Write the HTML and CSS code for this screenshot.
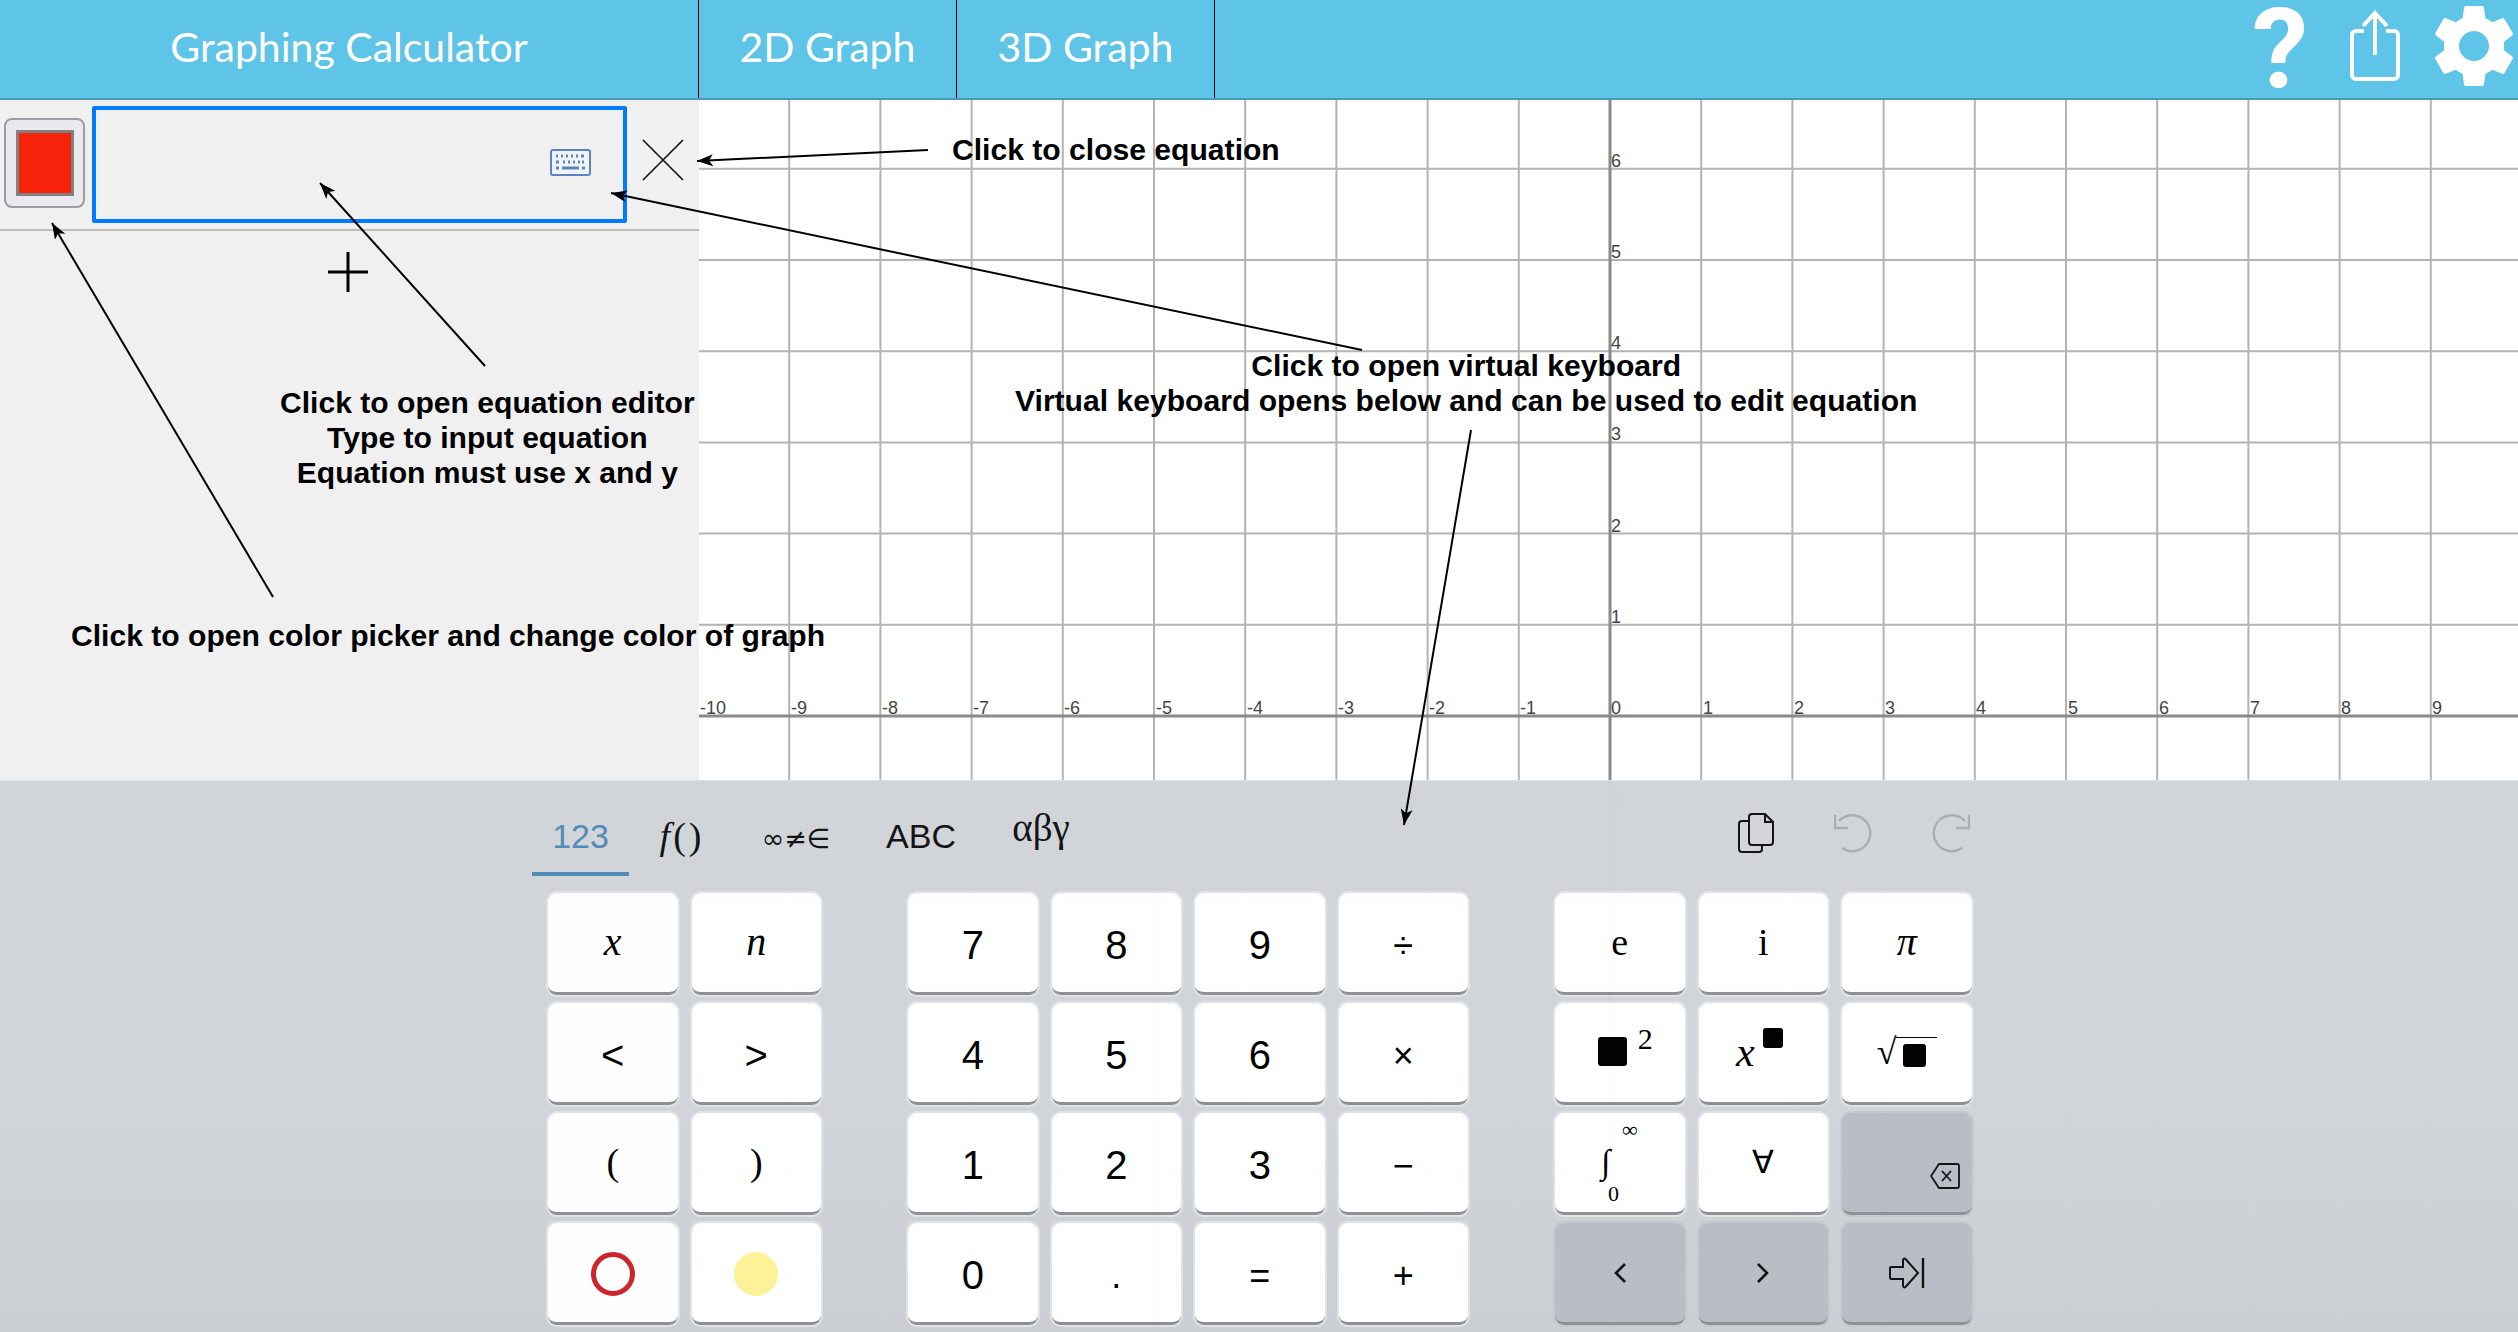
FILE: index.html
```html
<!DOCTYPE html>
<html lang="en">
<head>
  <meta charset="utf-8">
  <title>Graphing Calculator</title>
  <link rel="stylesheet" href="styles.css">
</head>
<body>
<div class="page">

  <!-- top bar -->
  <header class="topbar">
    <div class="app-title">Graphing Calculator</div>
    <div class="mode-tab">2D Graph</div>
    <div class="mode-tab">3D Graph</div>
    <div class="top-icons">
      <span class="help-icon">?</span>
      <svg class="share-icon" width="60" height="76" viewBox="0 0 60 76">
        <path d="M19 21H11a4 4 0 0 0-4 4V65a4 4 0 0 0 4 4H49a4 4 0 0 0 4-4V25a4 4 0 0 0-4-4H41" fill="none" stroke="#fff" stroke-width="4"/>
        <path d="M30 45V3M18 16L30 3L42 16" fill="none" stroke="#fff" stroke-width="4"/>
      </svg>
      <svg class="gear-icon" width="100" height="100" viewBox="0 0 24 24">
        <path fill="#fff" fill-rule="evenodd" d="M19.14,12.94c0.04-0.3,0.06-0.61,0.06-0.94c0-0.32-0.02-0.64-0.07-0.94l2.03-1.58c0.18-0.14,0.23-0.41,0.12-0.61l-1.92-3.32c-0.12-0.22-0.37-0.29-0.59-0.22l-2.39,0.96c-0.5-0.38-1.03-0.7-1.62-0.94L14.4,2.81c-0.04-0.24-0.24-0.41-0.48-0.41h-3.84c-0.24,0-0.43,0.17-0.47,0.41L9.25,5.35C8.66,5.59,8.12,5.92,7.63,6.29L5.24,5.33c-0.22-0.08-0.47,0-0.59,0.22L2.74,8.87C2.62,9.08,2.66,9.34,2.86,9.48l2.03,1.58C4.84,11.36,4.8,11.69,4.8,12s0.02,0.64,0.07,0.94l-2.03,1.58c-0.18,0.14-0.23,0.41-0.12,0.61l1.92,3.32c0.12,0.22,0.37,0.29,0.59,0.22l2.39-0.96c0.5,0.38,1.03,0.7,1.62,0.94l0.36,2.54c0.05,0.24,0.24,0.41,0.48,0.41h3.84c0.24,0,0.44-0.17,0.47-0.41l0.36-2.54c0.59-0.24,1.13-0.56,1.62-0.94l2.39,0.96c0.22,0.08,0.47,0,0.59-0.22l1.92-3.32c0.12-0.22,0.07-0.47-0.12-0.61L19.14,12.94z M12,15.6c-1.98,0-3.6-1.62-3.6-3.6s1.62-3.6,3.6-3.6s3.6,1.62,3.6,3.6S13.98,15.6,12,15.6z"/>
      </svg>
    </div>
  </header>

  <main class="workspace">
    <!-- equation list -->
    <aside class="equations">
      <div class="equation-row">
        <button class="color-button"><span class="color-swatch"></span></button>
        <div class="equation-input">
          <svg width="41" height="27" viewBox="0 0 41 27">
            <rect x="1" y="1" width="39" height="25" rx="2" fill="#f0f4f8" stroke="#5a86bd" stroke-width="2"/>
            <path d="M6 7h2M11 7h2M16 7h2M21 7h2M26 7h2M31 7h3M6 13h3M13 13h2M18 13h2M23 13h2M28 13h2M32 13h2M6 19h3M12 19h17M32 19h3" stroke="#5a86bd" stroke-width="3" fill="none"/>
          </svg>
        </div>
        <svg class="close-icon" width="42" height="42" viewBox="0 0 42 42">
          <path d="M1 1L41 41M41 1L1 41" stroke="#111" stroke-width="1.6" fill="none"/>
        </svg>
      </div>
      <div class="add-row">
        <svg width="42" height="42" viewBox="0 0 42 42">
          <path d="M21 1V41M1 21H41" stroke="#000" stroke-width="3" fill="none"/>
        </svg>
      </div>
    </aside>

    <!-- graph canvas, coordinates are page pixels -->
    <svg class="graph" viewBox="699 100 1819 1232">
      <path class="grid-line" d="M789.2 100V1332M880.4 100V1332M971.6 100V1332M1062.8 100V1332M1154 100V1332M1245.2 100V1332M1336.4 100V1332M1427.6 100V1332M1518.8 100V1332M1701.2 100V1332M1792.4 100V1332M1883.6 100V1332M1974.8 100V1332M2066 100V1332M2157.2 100V1332M2248.4 100V1332M2339.6 100V1332M2430.8 100V1332"/>
      <path class="grid-line" d="M699 168.8H2518M699 260H2518M699 351.2H2518M699 442.4H2518M699 533.6H2518M699 624.8H2518M699 807.2H2518M699 898.4H2518M699 989.6H2518M699 1080.8H2518M699 1172H2518M699 1263.2H2518"/>
      <path class="axis-line" d="M1610 100V1332M699 716H2518"/>
      <g class="axis-label">
        <text x="700" y="714">-10</text>
        <text x="791" y="714">-9</text>
        <text x="882" y="714">-8</text>
        <text x="973" y="714">-7</text>
        <text x="1064" y="714">-6</text>
        <text x="1156" y="714">-5</text>
        <text x="1247" y="714">-4</text>
        <text x="1338" y="714">-3</text>
        <text x="1429" y="714">-2</text>
        <text x="1520" y="714">-1</text>
        <text x="1611" y="714">0</text>
        <text x="1703" y="714">1</text>
        <text x="1794" y="714">2</text>
        <text x="1885" y="714">3</text>
        <text x="1976" y="714">4</text>
        <text x="2068" y="714">5</text>
        <text x="2159" y="714">6</text>
        <text x="2250" y="714">7</text>
        <text x="2341" y="714">8</text>
        <text x="2432" y="714">9</text>
        <text x="1611" y="167">6</text>
        <text x="1611" y="258">5</text>
        <text x="1611" y="349">4</text>
        <text x="1611" y="440">3</text>
        <text x="1611" y="532">2</text>
        <text x="1611" y="623">1</text>
        <text x="1611" y="805">-1</text>
        <text x="1611" y="896">-2</text>
      </g>
    </svg>
  </main>

  <!-- virtual keyboard, sits over the graph -->
  <section class="keyboard">
    <div class="kb-toolbar">
      <div class="kb-tab kb-tab-active">123</div>
      <div class="kb-tab kb-tab-func"><i>f</i>()</div>
      <div class="kb-tab kb-tab-symbols">∞≠∈</div>
      <div class="kb-tab kb-tab-abc">ABC</div>
      <div class="kb-tab kb-tab-greek">αβγ</div>
      <div class="kb-tools">
        <svg width="36" height="40" viewBox="0 0 36 40">
          <path d="M11 8H4a3 3 0 0 0-3 3V36a3 3 0 0 0 3 3H21a3 3 0 0 0 3-3V32" fill="none" stroke="#111" stroke-width="2"/>
          <path d="M14 1H27L35 9V29a3 3 0 0 1-3 3H14a3 3 0 0 1-3-3V4a3 3 0 0 1 3-3ZM27 1V9H35" fill="none" stroke="#111" stroke-width="2"/>
        </svg>
        <svg width="38" height="40" viewBox="0 0 38 40">
          <path d="M8 35A18 18 0 1 0 5 8M1 2V15H14" fill="none" stroke="#a9adb2" stroke-width="2.4"/>
        </svg>
        <svg width="38" height="40" viewBox="0 0 38 40">
          <path d="M30 35A18 18 0 1 1 33 8M37 2V15H24" fill="none" stroke="#a9adb2" stroke-width="2.4"/>
        </svg>
      </div>
    </div>

    <div class="kb-keys">
      <div class="key-group group-left">
        <div class="key key-math">x</div>
        <div class="key key-math">n</div>
        <div class="key key-digit">&lt;</div>
        <div class="key key-digit">&gt;</div>
        <div class="key key-serif">(</div>
        <div class="key key-serif">)</div>
        <div class="key"><span class="ring"></span></div>
        <div class="key"><span class="dot"></span></div>
      </div>

      <div class="key-group group-mid">
        <div class="key key-digit">7</div>
        <div class="key key-digit">8</div>
        <div class="key key-digit">9</div>
        <div class="key key-op">÷</div>
        <div class="key key-digit">4</div>
        <div class="key key-digit">5</div>
        <div class="key key-digit">6</div>
        <div class="key key-op">×</div>
        <div class="key key-digit">1</div>
        <div class="key key-digit">2</div>
        <div class="key key-digit">3</div>
        <div class="key key-op">−</div>
        <div class="key key-digit">0</div>
        <div class="key key-op">.</div>
        <div class="key key-op">=</div>
        <div class="key key-op">+</div>
      </div>

      <div class="key-group group-right">
        <div class="key key-serif">e</div>
        <div class="key key-serif">i</div>
        <div class="key key-math">π</div>
        <div class="key key-serif key-power"><span class="box box-big"></span><span class="power-two">2</span></div>
        <div class="key key-math key-xpow">x<span class="box box-small"></span></div>
        <div class="key key-serif key-root">√<span class="root-top"><span class="box box-mid"></span></span></div>
        <div class="key key-integral">
          <span class="int-top">∞</span>
          <span class="int-sign">∫</span>
          <span class="int-bottom">0</span>
        </div>
        <div class="key key-serif key-forall">∀</div>
        <div class="key key-dark key-backspace">
          <svg width="30" height="26" viewBox="0 0 30 26">
            <path d="M9 1H27a2 2 0 0 1 2 2V23a2 2 0 0 1-2 2H9L1 13Z" fill="none" stroke="#111" stroke-width="1.8"/>
            <path d="M12 8L21 18M21 8L12 18" stroke="#111" stroke-width="1.8" fill="none"/>
          </svg>
        </div>
        <div class="key key-dark">
          <svg width="14" height="22" viewBox="0 0 14 22"><path d="M12 2L3 11L12 20" fill="none" stroke="#111" stroke-width="2.6"/></svg>
        </div>
        <div class="key key-dark">
          <svg width="14" height="22" viewBox="0 0 14 22"><path d="M2 2L11 11L2 20" fill="none" stroke="#111" stroke-width="2.6"/></svg>
        </div>
        <div class="key key-dark">
          <svg width="36" height="32" viewBox="0 0 36 32">
            <path d="M2 10H14V3a1.5 1.5 0 0 1 2.5-1L29 16L16.5 30a1.5 1.5 0 0 1-2.5-1V22H2a1.5 1.5 0 0 1-1-1V11a1.5 1.5 0 0 1 1-1Z" fill="none" stroke="#111" stroke-width="2"/>
            <path d="M34 1V31" stroke="#111" stroke-width="2.4"/>
          </svg>
        </div>
      </div>
    </div>
  </section>

  <!-- help annotations drawn over the screenshot -->
  <div class="notes">
    <svg class="note-arrows" viewBox="0 0 2518 1332">
      <defs>
        <marker id="arrowhead" markerWidth="16" markerHeight="12" refX="0" refY="6" orient="auto" markerUnits="userSpaceOnUse">
          <path d="M0 6L16 0L12 6L16 12Z" fill="#000"/>
        </marker>
      </defs>
      <line x1="697" y1="161" x2="928" y2="150" marker-start="url(#arrowhead)"/>
      <line x1="611" y1="193" x2="1362" y2="350" marker-start="url(#arrowhead)"/>
      <line x1="320" y1="183" x2="485" y2="366" marker-start="url(#arrowhead)"/>
      <line x1="52" y1="223" x2="273" y2="597" marker-start="url(#arrowhead)"/>
      <line x1="1404" y1="825" x2="1471" y2="430" marker-start="url(#arrowhead)"/>
    </svg>
    <div class="note note-close">Click to close equation</div>
    <div class="note note-editor">Click to open equation editor<br>Type to input equation<br>Equation must use x and y</div>
    <div class="note note-color">Click to open color picker and change color of graph</div>
    <div class="note note-keyboard">Click to open virtual keyboard<br>Virtual keyboard opens below and can be used to edit equation</div>
  </div>

</div>
</body>
</html>
```

FILE: styles.css
```css
/* page */
html, body {
  margin: 0;
  padding: 0;
}

.page {
  position: relative;
  display: flex;
  flex-direction: column;
  width: 2518px;
  height: 1332px;
  overflow: hidden;
  background-color: #fff;
  font-family: "Liberation Sans", Arial, sans-serif;
  color: #000;
}

/* top bar */
.topbar {
  display: flex;
  align-items: stretch;
  flex: none;
  height: 98px;
  background-color: #5ec4e8;
  border-bottom: 2px solid #4a9bb5;
  color: #fff;
  font-family: Lato, "Open Sans", sans-serif;
  font-size: 41px;
  font-weight: 400;
}

.app-title {
  display: flex;
  align-items: center;
  justify-content: center;
  width: 698px;
  padding-bottom: 6px;
  border-right: 1px solid #000;
}

.mode-tab {
  display: flex;
  align-items: center;
  justify-content: center;
  width: 257px;
  padding-bottom: 6px;
  border-right: 1px solid #000;
}

.top-icons {
  display: flex;
  align-items: center;
  margin-left: auto;
}

.help-icon {
  width: 70px;
  margin: 0 30px 0 0;
  font-family: Roboto, sans-serif;
  font-size: 112px;
  font-weight: 700;
  line-height: 98px;
  text-align: center;
}

.share-icon {
  margin-right: 19px;
  margin-top: -2px;
}

.gear-icon {
  margin-right: -6px;
  margin-top: -6px;
}

/* equation list */
.workspace {
  display: flex;
  flex: 1;
  min-height: 0;
}

.equations {
  flex: none;
  width: 699px;
  background-color: #f0f0f0;
}

.equation-row {
  display: flex;
  align-items: center;
  height: 131px;
  padding-left: 4px;
  box-sizing: border-box;
  border-bottom: 2px solid #bdbdbd;
}

.color-button {
  display: flex;
  align-items: center;
  justify-content: center;
  width: 81px;
  height: 90px;
  margin: -4px 7px 0 0;
  padding: 0;
  background-color: #e9e9ef;
  border: 2px solid #9c9ca6;
  border-radius: 8px;
}

.color-swatch {
  width: 58px;
  height: 66px;
  box-sizing: border-box;
  background-color: #f62209;
  border: 3px solid #808080;
}

.equation-input {
  display: flex;
  align-items: center;
  justify-content: flex-end;
  width: 535px;
  height: 117px;
  padding-right: 32px;
  box-sizing: border-box;
  border: 4px solid #007aff;
  border-radius: 2px;
}

.equation-input svg {
  margin-top: -4px;
}

.close-icon {
  margin: -9px 0 0 15px;
}

.add-row {
  display: flex;
  justify-content: center;
  padding: 20px 4px 0 0;
}

/* graph */
.graph {
  flex: 1;
  display: block;
  height: 100%;
  background-color: #fff;
}

.grid-line {
  fill: none;
  stroke: #b4b4b4;
  stroke-width: 2;
}

.axis-line {
  fill: none;
  stroke: #8a8a8a;
  stroke-width: 3;
}

.axis-label {
  font-family: "Liberation Sans", Arial, sans-serif;
  font-size: 18px;
  fill: #444;
}

/* keyboard */
.keyboard {
  position: absolute;
  left: 0;
  right: 0;
  bottom: 0;
  height: 552px;
  background: linear-gradient(#d1d5da 60%, #cbcfd4);
  opacity: 0.985;
  border-top: 1px solid #dcdfe3;
  box-sizing: border-box;
}

.kb-toolbar {
  display: flex;
  align-items: flex-start;
  height: 112px;
  padding-left: 532px;
  box-sizing: border-box;
}

.kb-tab {
  height: 95px;
  box-sizing: border-box;
  padding-top: 33px;
  font-size: 34px;
  line-height: 44px;
  text-align: center;
  color: #111;
}

.kb-tab-active {
  width: 97px;
  color: #4f8ab8;
  border-bottom: 4px solid #4f8ab8;
}

.kb-tab-func {
  width: 106px;
  font-family: "Liberation Serif", serif;
  font-size: 38px;
  letter-spacing: 3px;
}

.kb-tab-symbols {
  width: 122px;
  font-family: "DejaVu Sans", sans-serif;
  font-size: 27px;
  padding-top: 36px;
}

.kb-tab-abc {
  width: 128px;
}

.kb-tab-greek {
  width: 112px;
  padding-top: 25px;
  font-family: "Liberation Serif", serif;
  font-size: 39px;
}

.kb-tools {
  display: flex;
  gap: 60px;
  margin: 32px 0 0 641px;
}

.kb-keys {
  display: flex;
  gap: 87px;
  padding-left: 548px;
}

.key-group {
  display: grid;
  grid-auto-rows: 102px;
  gap: 8px 14px;
}

.group-left {
  grid-template-columns: repeat(2, 129.5px);
}

.group-mid {
  grid-template-columns: repeat(4, 129.5px);
}

.group-right {
  grid-template-columns: repeat(3, 129.5px);
}

.key {
  position: relative;
  display: flex;
  align-items: center;
  justify-content: center;
  box-sizing: border-box;
  background-color: #fff;
  border-bottom: 3px solid #8e8e93;
  border-radius: 9px;
  box-shadow: 0 0 0 2px #e0e2e6;
  font-size: 40px;
}

.key-digit {
  padding-top: 5px;
  font-family: "Liberation Sans", Arial, sans-serif;
}

.key-op {
  padding-top: 6px;
  font-size: 36px;
}

.key-serif {
  padding-bottom: 2px;
  font-family: "Liberation Serif", serif;
  font-size: 38px;
}

.key-math {
  padding-bottom: 2px;
  font-family: "Liberation Serif", serif;
  font-style: italic;
}

.key-dark {
  background-color: #b8bcc6;
  border-bottom-color: #8e9098;
  box-shadow: 0 0 0 2px #c6c9d0;
}

.key-backspace {
  align-items: flex-end;
  justify-content: flex-end;
  padding: 0 12px 23px 0;
}

.ring {
  width: 44px;
  height: 44px;
  margin-top: 2px;
  box-sizing: border-box;
  border: 5px solid #cc2229;
  border-radius: 50%;
}

.dot {
  width: 44px;
  height: 44px;
  margin-top: 2px;
  background-color: #fff197;
  border-radius: 50%;
}

.box {
  display: block;
  background-color: #000;
  border-radius: 3px;
}

.box-big {
  width: 29px;
  height: 29px;
}

.box-small {
  width: 20px;
  height: 20px;
  margin: -28px 0 0 8px;
}

.box-mid {
  width: 23px;
  height: 23px;
}

.key-power {
  padding-left: 11px;
}

.power-two {
  margin: -26px 0 0 11px;
  font-size: 30px;
}

.key-xpow {
  padding-right: 8px;
  font-size: 42px;
}

.key-root {
  font-size: 36px;
}

.root-top {
  margin-left: -1px;
  padding: 6px 11px 0 7px;
  border-top: 1px solid #000;
}

.key-forall {
  font-size: 32px;
}

.int-top,
.int-sign,
.int-bottom {
  position: absolute;
  font-family: "Liberation Serif", serif;
  line-height: 1;
}

.int-top {
  left: 67px;
  top: 6px;
  font-size: 22px;
}

.int-sign {
  left: 46px;
  top: 32px;
  font-size: 34px;
}

.int-bottom {
  left: 53px;
  top: 70px;
  font-size: 22px;
}

/* annotations */
.notes {
  position: absolute;
  left: 0;
  top: 0;
  width: 2518px;
  height: 1332px;
  pointer-events: none;
}

.note-arrows {
  position: absolute;
  left: 0;
  top: 0;
  width: 100%;
  height: 100%;
}

.note-arrows line {
  stroke: #000;
  stroke-width: 2;
}

.note {
  position: absolute;
  font-size: 30.1px;
  font-weight: 700;
  line-height: 35px;
  text-align: center;
  white-space: nowrap;
}

.note-close {
  left: 952px;
  top: 132px;
}

.note-editor {
  left: 280px;
  top: 385px;
}

.note-color {
  left: 71px;
  top: 618px;
}

.note-keyboard {
  left: 1015px;
  top: 348px;
}
```
